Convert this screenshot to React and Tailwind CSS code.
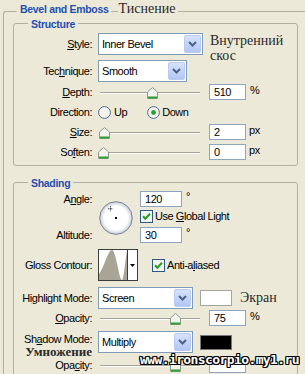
import React from "react";

function Chevron() {
  return (
    <svg width="9" height="6" viewBox="0 0 9 6">
      <path d="M1 1 L4.5 4.5 L8 1" fill="none" stroke="#4d6185" strokeWidth="2" />
    </svg>
  );
}

function Select({ className, children }) {
  return (
    <div className={`flex items-center bg-white border border-[#7f9db9] h-[22px] ${className}`}>
      <span className="flex-1 pl-[3px] leading-[20px] whitespace-nowrap">{children}</span>
      <div className="w-[17px] h-[18px] mr-px flex items-center justify-center rounded-[2px] border border-[#b9cbf3] bg-linear-to-b from-[#d6e2fd] to-[#b3c6f4]">
        <Chevron />
      </div>
    </div>
  );
}

function Field({ className, children }) {
  return (
    <div className={`h-[16px] bg-white border border-[#8ea5c0] pl-[4px] leading-[14px] ${className}`}>{children}</div>
  );
}

function Thumb() {
  return (
    <svg width="11" height="12" viewBox="0 0 11 12">
      <path d="M5.5 0.5 L10.5 5 L10.5 11.5 L0.5 11.5 L0.5 5 Z" fill="#f3f3ee" stroke="#8c9a8c" />
      <path d="M1 10.5 H10" stroke="#2ea02e" strokeWidth="2" />
    </svg>
  );
}

function Slider({ pos }) {
  return (
    <div className="relative w-[105px] h-[16px] shrink-0">
      <div className="absolute left-[2px] w-[100px] top-[8px] h-[2px] border-t border-[#a3a297] bg-white" />
      <div className="absolute top-[3px] flex" style={{ left: pos }}>
        <Thumb />
      </div>
    </div>
  );
}

function Checkbox() {
  return (
    <svg width="13" height="13" viewBox="0 0 13 13" className="shrink-0">
      <rect x="0.5" y="0.5" width="12" height="12" fill="#f4f4ef" stroke="#2c5a86" />
      <path d="M3 6.3 L5.3 8.8 L10 3.8" fill="none" stroke="#21a121" strokeWidth="2" />
    </svg>
  );
}

function Radio({ on }) {
  return (
    <svg width="13" height="13" viewBox="0 0 13 13" className="shrink-0">
      <circle cx="6.5" cy="6.5" r="5.9" fill="#f4f4ef" stroke="#4a6a90" />
      {on && <circle cx="6.5" cy="6.5" r="2.4" fill="#2aa02a" />}
    </svg>
  );
}

function Dial() {
  return (
    <svg width="34" height="34" viewBox="0 0 34 34">
      <defs>
        <radialGradient id="dialg" cx="50%" cy="50%" r="50%">
          <stop offset="72%" stopColor="#ffffff" />
          <stop offset="100%" stopColor="#c6ccd9" />
        </radialGradient>
      </defs>
      <circle cx="17" cy="17" r="16.3" fill="url(#dialg)" stroke="#7b8395" />
      <rect x="16" y="16" width="2" height="2" fill="#000" />
      <path d="M11.5 5.3 V10.3 M9 7.8 H14" stroke="#333" strokeWidth="1" strokeDasharray="1 0.6" />
    </svg>
  );
}

function Contour() {
  return (
    <div className="flex w-[40px] h-[32px] border border-[#3c3c3c] bg-white">
      <svg width="28" height="30" viewBox="0 0 28 30" className="shrink-0">
        <path d="M0 30 L0 24 C5 18 9 0 13 0 C17 0 20 30 23 30 C25 30 26 10 28 1 L28 30 Z" fill="#a8a596" />
      </svg>
      <div className="flex-1 flex items-center justify-center border-l border-[#3c3c3c]">
        <svg width="5" height="3" viewBox="0 0 5 3">
          <path d="M0 0 H5 L2.5 3 Z" fill="#000" />
        </svg>
      </div>
    </div>
  );
}

function Label({ children, className = "" }) {
  return <div className={`w-[78px] shrink-0 text-right whitespace-nowrap ${className}`}>{children}</div>;
}

const serif = "font-['Liberation_Serif','Times_New_Roman',serif] tracking-normal text-[#2a2a2a]";

export default function App() {
  return (
    <div className="relative w-[305px] h-[374px] overflow-hidden bg-[#ece9d8] text-black text-[11px] tracking-[-0.45px] font-['Liberation_Sans',Arial,sans-serif]">
      <fieldset className="ml-[3px] mt-[4px] border-l border-t border-[#b0afa2] rounded-tl-[3px]">
        <legend className="flex items-start h-[14px] ml-[13px] px-[3px]">
          <span className="font-bold text-[10.5px] tracking-[-0.3px] leading-[10px] text-[#1f4fb0]">Bevel and Emboss</span>
          <span className="self-center w-[7px] h-px bg-[#b0afa2] ml-[2px] mr-[1px]" />
          <span className={`${serif} text-[14px] leading-[9px]`}>Тиснение</span>
        </legend>

        {/* Structure */}
        <fieldset className="ml-[9px] w-[285px] border border-[#b0afa2] rounded-[3px]">
          <legend className="flex items-start h-[10px] ml-[14px] px-[3px]">
            <span className="font-bold text-[10.5px] tracking-[-0.3px] leading-[12px] text-[#1f4fb0]">Structure</span>
          </legend>
          <div className="flex flex-col pt-[5px] pb-[5px]">
            <div className="flex items-start">
              <div className="flex flex-col">
                <div className="flex items-center h-[22px]">
                  <Label><u>S</u>tyle:</Label>
                  <Select className="ml-[6px] w-[105px]">Inner Bevel</Select>
                </div>
                <div className="flex items-center h-[22px] mt-[5px]">
                  <Label>Tec<u>h</u>nique:</Label>
                  <Select className="ml-[6px] w-[89px]">Smooth</Select>
                </div>
              </div>
              <div className={`${serif} ml-[7px] text-[14px] leading-[15px]`}>
                Внутренний
                <br />
                скос
              </div>
            </div>

            <div className="flex items-center h-[16px] mt-[2px]">
              <Label><u>D</u>epth:</Label>
              <div className="ml-[6px] flex items-start">
                <Slider pos={49} />
                <Field className="ml-[6px] w-[37px]">510</Field>
                <span className="ml-[4px] leading-[12px]">%</span>
              </div>
            </div>

            <div className="flex items-center h-[16px] mt-[4px]">
              <Label>Direction:</Label>
              <div className="ml-[6px] flex items-center">
                <Radio />
                <span className="ml-[3px]">Up</span>
                <span className="ml-[20px] flex items-center">
                  <Radio on />
                  <span className="ml-[2px]">Down</span>
                </span>
              </div>
            </div>

            <div className="flex items-center h-[16px] mt-[4px]">
              <Label><u>S</u>ize:</Label>
              <div className="ml-[6px] flex items-start">
                <Slider pos={1} />
                <Field className="ml-[6px] w-[37px]">2</Field>
                <span className="ml-[3px] leading-[13px]">px</span>
              </div>
            </div>

            <div className="flex items-center h-[16px] mt-[4px]">
              <Label>So<u>f</u>ten:</Label>
              <div className="ml-[6px] flex items-start">
                <Slider pos={0} />
                <Field className="ml-[6px] w-[37px]">0</Field>
                <span className="ml-[3px] leading-[13px]">px</span>
              </div>
            </div>
          </div>
        </fieldset>

        {/* Shading */}
        <fieldset className="mt-[11px] ml-[9px] w-[285px] border border-[#b0afa2] rounded-[3px]">
          <legend className="flex items-start h-[10px] ml-[14px] px-[3px]">
            <span className="font-bold text-[10.5px] tracking-[-0.3px] leading-[12px] text-[#1f4fb0]">Shading</span>
          </legend>
          <div className="flex flex-col pt-[4px] pb-[10px]">
            <div className="flex h-[52px]">
              <div className="w-[78px] shrink-0 flex flex-col items-end">
                <div className="h-[16px] leading-[16px]">A<u>n</u>gle:</div>
                <div className="mt-auto h-[16px] leading-[16px]">Altitude:</div>
              </div>
              <div className="ml-[7px] mt-[10px]">
                <Dial />
              </div>
              <div className="ml-[7px] flex flex-col">
                <div className="flex items-start">
                  <Field className="w-[42px]">120</Field>
                  <span className="ml-[4px] leading-[10px]">°</span>
                </div>
                <div className="mt-[3px] flex items-center h-[13px]">
                  <Checkbox />
                  <span className="ml-[2px] whitespace-nowrap">Use <u>G</u>lobal Light</span>
                </div>
                <div className="mt-[4px] flex items-start">
                  <Field className="w-[42px]">30</Field>
                  <span className="ml-[4px] leading-[10px]">°</span>
                </div>
              </div>
            </div>

            <div className="mt-[6px] flex items-center h-[32px]">
              <Label>Gloss Contour:</Label>
              <div className="ml-[6px]">
                <Contour />
              </div>
              <div className="ml-[14px] flex items-center">
                <Checkbox />
                <span className="ml-[2px]">Anti-a<u>l</u>iased</span>
              </div>
            </div>

            <div className="mt-[6px] flex items-center h-[22px]">
              <Label>Hi<u>g</u>hlight Mode:</Label>
              <Select className="ml-[6px] w-[95px]">Screen</Select>
              <div className="ml-[7px] w-[32px] h-[16px] bg-white border border-[#a5a5a0]" />
              <span className={`${serif} ml-[8px] text-[14px] leading-[16px]`}>Экран</span>
            </div>

            <div className="mt-[1px] flex items-center h-[16px]">
              <Label><u>O</u>pacity:</Label>
              <div className="ml-[6px] flex items-start">
                <Slider pos={72} />
                <Field className="ml-[6px] w-[37px]">75</Field>
                <span className="ml-[4px] leading-[12px]">%</span>
              </div>
            </div>

            <div className="mt-[5px] flex items-start h-[22px]">
              <div className="w-[78px] shrink-0 flex flex-col items-end pt-[2px]">
                <div className="h-[13px] leading-[13px] whitespace-nowrap">Sh<u>a</u>dow Mode:</div>
                <div className={`${serif} font-bold text-[13px] leading-[12px] whitespace-nowrap`}>Умножение</div>
              </div>
              <Select className="ml-[6px] w-[95px]">Multiply</Select>
              <div className="ml-[7px] mt-[4px] w-[32px] h-[15px] bg-black border border-[#7a7a7a]" />
            </div>

            <div className="mt-[4px] flex items-center h-[16px]">
              <Label>Opa<u>c</u>ity:</Label>
              <div className="ml-[6px] flex items-start">
                <Slider pos={72} />
                <Field className="ml-[6px] w-[37px]" />
              </div>
            </div>
          </div>
        </fieldset>
      </fieldset>

      <div className="absolute left-[140px] top-[351px] whitespace-nowrap font-['DejaVu_Sans_Mono',monospace] font-bold text-[13px] tracking-[-0.6px] leading-[18px] text-white [text-shadow:1px_0_0_#000,-1px_0_0_#000,0_1px_0_#000,0_-1px_0_#000,1px_1px_0_#000,-1px_-1px_0_#000,1px_-1px_0_#000,-1px_1px_0_#000]">
        www.ironscorpio.my1.ru
      </div>
    </div>
  );
}
